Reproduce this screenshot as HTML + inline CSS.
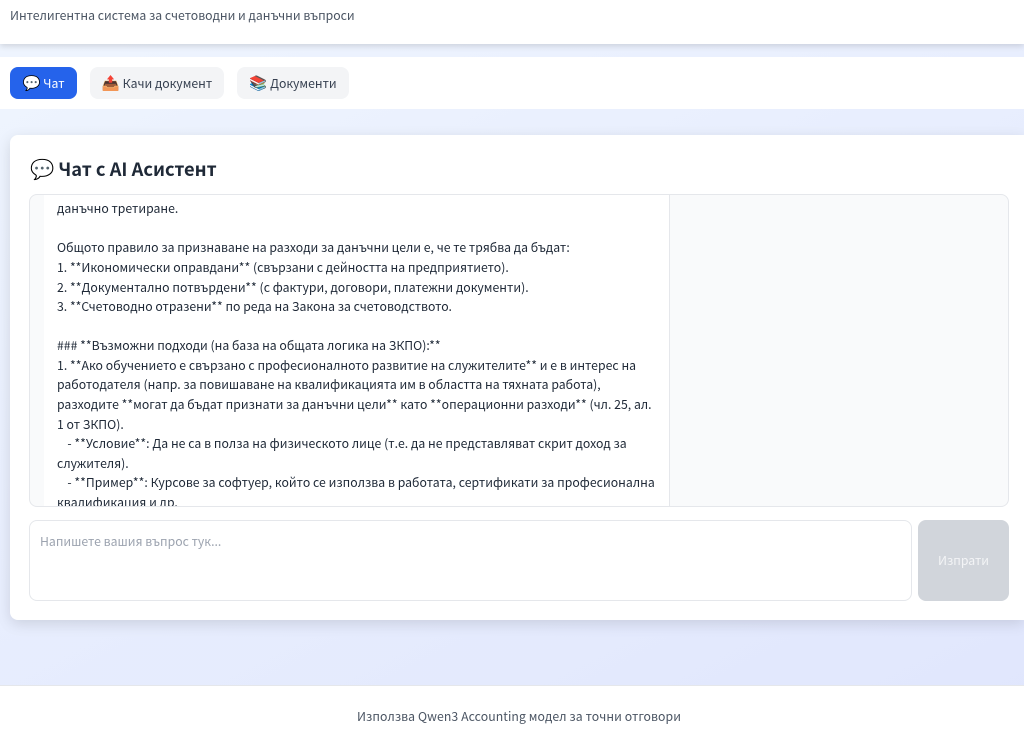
<!DOCTYPE html>
<html lang="bg"><head><meta charset="utf-8"><title>Чат</title>
<style>
*{box-sizing:border-box;margin:0;padding:0}
html,body{width:1024px;height:731px;overflow:hidden}
body{position:relative;font-family:"Noto Sans CJK JP","Liberation Sans",sans-serif;background:linear-gradient(153deg,#eff5fe,#e0e6fd);color:#374151}
#wrap{position:absolute;left:0;top:0;width:1024px;height:731px;filter:blur(.3px)}
.abs{position:absolute;white-space:nowrap}
.em{font-size:14.5px}
#head{position:absolute;left:0;top:0;width:1024px;height:44px;background:#fff;box-shadow:0 2px 6px rgba(0,0,0,.14)}
#nav{position:absolute;left:0;top:57px;width:1024px;height:52px;background:#fff}
.btn{position:absolute;top:67px;height:32px;border-radius:8px;background:#f3f4f6;color:#374151;font-size:12.25px;line-height:32px;text-align:center;white-space:nowrap}
#card{position:absolute;left:10px;top:135px;width:1014px;height:485px;background:#fff;border-radius:8px 0 0 8px;box-shadow:0 4px 14px rgba(0,0,0,.12)}
#box{position:absolute;left:29px;top:194px;width:980px;height:313px;background:#f9fafb;border:1px solid #e5e7eb;border-radius:8px;overflow:hidden}
#msg{position:absolute;left:14px;top:-1px;width:626px;height:313px;background:#fff;border-right:1px solid #e5e7eb;overflow:hidden}
#msg div{position:absolute;left:13px;white-space:nowrap;font-size:12.25px;line-height:20px;color:#1f2937}
#ta{position:absolute;left:29px;top:520px;width:883px;height:81px;border:1px solid #e5e7eb;border-radius:8px;background:#fff;font-size:12.25px;color:#9ca3af;padding:10px 10px;line-height:20px}
#send{position:absolute;left:918px;top:520px;width:91px;height:81px;border-radius:8px;background:#d1d5db;color:#f3f4f6;font-size:12.25px;line-height:81px;text-align:center}
#foot{position:absolute;left:0;top:685px;width:1024px;height:46px;background:#fff;border-top:1px solid #e5e7eb;text-align:center;font-size:12.25px;line-height:60px;color:#4b5563;padding-left:14px;letter-spacing:.08px}
</style></head><body><div id="wrap">
<div id="head"><div class="abs" style="left:10px;top:5px;font-size:12.25px;line-height:20px;color:#4b5563">Интелигентна система за счетоводни и данъчни въпроси</div></div>
<div id="nav"></div>
<div class="btn" style="left:10px;width:67px;background:#2563eb;color:#fff"><span class="em">💬</span> Чат</div>
<div class="btn" style="left:90px;width:134px"><span class="em">📤</span> Качи документ</div>
<div class="btn" style="left:237px;width:112px"><span class="em">📚</span> Документи</div>
<div id="card"></div>
<div class="abs" style="left:30px;top:154px;font-size:18.3px;line-height:28px;font-weight:700;color:#1f2937"><span style="font-size:19.5px">💬</span> Чат с AI Асистент</div>
<div id="box"><div id="msg">
<div style="top:-17px">В зависимост от вида на обучението, разходите могат да имат различно</div>
<div style="top:4px">данъчно третиране.</div>
<div style="top:43px">Общото правило за признаване на разходи за данъчни цели е, че те трябва да бъдат:</div>
<div style="top:63px">1. **Икономически оправдани** (свързани с дейността на предприятието).</div>
<div style="top:83px;letter-spacing:.03px">2. **Документално потвърдени** (с фактури, договори, платежни документи).</div>
<div style="top:102px">3. **Счетоводно отразени** по реда на Закона за счетоводството.</div>
<div style="top:141px">### **Възможни подходи (на база на общата логика на ЗКПО):**</div>
<div style="top:161px;letter-spacing:.02px">1. **Ако обучението е свързано с професионалното развитие на служителите** и е в интерес на</div>
<div style="top:180px">работодателя (напр. за повишаване на квалификацията им в областта на тяхната работа),</div>
<div style="top:200px;letter-spacing:.02px">разходите **могат да бъдат признати за данъчни цели** като **операционни разходи** (чл. 25, ал.</div>
<div style="top:220px">1 от ЗКПО).</div>
<div style="top:239px;left:15px;letter-spacing:.03px">&nbsp;&nbsp;&nbsp;- **Условие**: Да не са в полза на физическото лице (т.е. да не представляват скрит доход за</div>
<div style="top:259px">служителя).</div>
<div style="top:278px;left:15px;letter-spacing:.03px">&nbsp;&nbsp;&nbsp;- **Пример**: Курсове за софтуер, който се използва в работата, сертификати за професионална</div>
<div style="top:298px">квалификация и др.</div>
</div></div>
<div id="ta">Напишете вашия въпрос тук...</div>
<div id="send">Изпрати</div>
<div id="foot">Използва Qwen3 Accounting модел за точни отговори</div>
</div></body></html>
